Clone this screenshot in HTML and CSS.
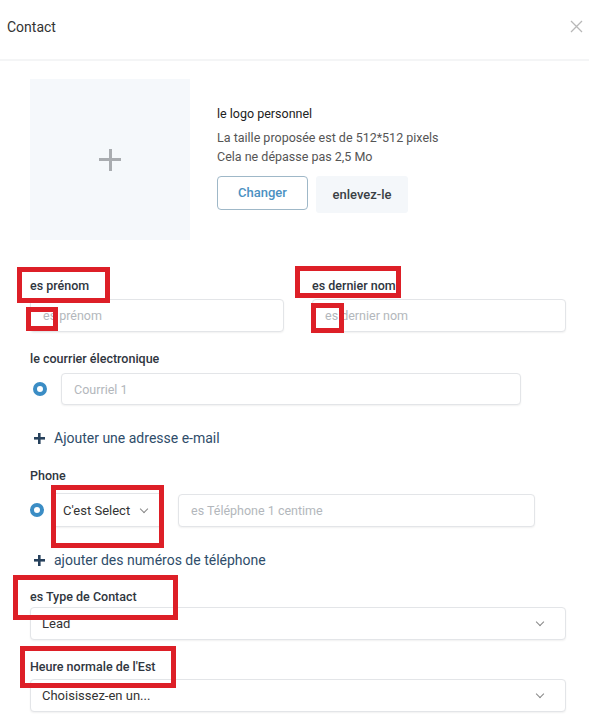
FILE: index.html
```html
<!DOCTYPE html>
<html>
<head lang="fr">
    <meta charset="UTF-8">
    <title>Contact</title>
    <link rel="stylesheet" href="styles.css">
</head>
<body>
<div id="modal">
    <div class="head">
        <span class="title">Contact</span>
        <a class="close" href="javascript:;">
            <svg width="13" height="13" viewBox="0 0 13 13"><path d="M1 1L12 12M12 1L1 12" stroke="#b8b8b8" stroke-width="1.3" fill="none"/></svg>
        </a>
    </div>

    <div class="logo">
        <div class="logoBox"><span class="plus"></span></div>
        <div class="logoInfo">
            <p class="logoTitle">le logo personnel</p>
            <p class="hint">La taille proposée est de 512*512 pixels</p>
            <p class="hint">Cela ne dépasse pas 2,5 Mo</p>
            <div class="btns">
                <a class="btnChange" href="javascript:;">Changer</a>
                <a class="btnRemove" href="javascript:;">enlevez-le</a>
            </div>
        </div>
    </div>

    <div class="names">
        <div class="col">
            <label>es prénom</label>
            <div class="input"><span class="ph">es prénom</span></div>
        </div>
        <div class="col">
            <label>es dernier nom</label>
            <div class="input"><span class="ph">es dernier nom</span></div>
        </div>
    </div>

    <div class="group email">
        <label>le courrier électronique</label>
        <div class="row">
            <span class="radio"></span>
            <div class="input wEmail"><span class="ph">Courriel 1</span></div>
        </div>
    </div>
    <a class="add addMail" href="javascript:;"><span class="addPlus"></span>Ajouter une adresse e-mail</a>

    <div class="group phone">
        <label>Phone</label>
        <div class="row">
            <span class="radio"></span>
            <div class="select small">C'est Select<span class="chev"></span></div>
            <div class="input wPhone"><span class="ph">es Téléphone 1 centime</span></div>
        </div>
    </div>
    <a class="add addPhone" href="javascript:;"><span class="addPlus"></span>ajouter des numéros de téléphone</a>

    <div class="group type">
        <label>es Type de Contact</label>
        <div class="select wide">Lead<span class="chev"></span></div>
    </div>

    <div class="group zone">
        <label>Heure normale de l'Est</label>
        <div class="select wide">Choisissez-en un...<span class="chev"></span></div>
    </div>

    <!-- annotations -->
    <div class="mark" style="left:17px;top:267px;width:93px;height:36px"></div>
    <div class="mark" style="left:26px;top:307px;width:32px;height:24px"></div>
    <div class="mark" style="left:295px;top:266px;width:106px;height:32px"></div>
    <div class="mark" style="left:311px;top:303px;width:33px;height:30px"></div>
    <div class="mark" style="left:51px;top:485px;width:113px;height:63px"></div>
    <div class="mark" style="left:13px;top:575px;width:165px;height:45px"></div>
    <div class="mark" style="left:20px;top:646px;width:156px;height:42px"></div>
</div>
</body>
</html>
```

FILE: styles.css
```css
*{
    margin: 0;
    padding: 0;
    box-sizing: border-box;
}
a{
    text-decoration: none;
}
body{
    font-family: Roboto, "Liberation Sans", sans-serif;
    color: #333;
    background: #fff;
}
#modal{
    width: 589px;
    height: 718px;
    position: relative;
    overflow: hidden;
}
.head{
    height: 61px;
    display: flex;
    align-items: center;
    justify-content: space-between;
    padding: 0 6px 6px 7px;
    border-bottom: 2px solid #f4f5f6;
}
.title{
    font-size: 14px;
    color: #333;
}
.close{
    display: block;
    width: 13px;
    height: 13px;
}
.close svg{
    display: block;
}
.logo{
    display: flex;
    padding: 18px 0 0 30px;
}
.logoBox{
    width: 160px;
    height: 161px;
    background: #f5f8fb;
    display: flex;
    align-items: center;
    justify-content: center;
}
.plus{
    display: block;
    width: 22px;
    height: 22px;
    background:
        linear-gradient(#a9acb0, #a9acb0) center / 22px 3px no-repeat,
        linear-gradient(#a9acb0, #a9acb0) center / 3px 22px no-repeat;
}
.logoInfo{
    margin-left: 27px;
    padding-top: 25px;
}
.logoTitle{
    font-size: 12.5px;
    line-height: 19px;
    color: #222;
    margin-bottom: 5px;
}
.hint{
    font-size: 12.5px;
    line-height: 19px;
    color: #555;
}
.btns{
    display: flex;
    align-items: flex-start;
    gap: 8px;
    margin-top: 10px;
}
.btnChange{
    display: flex;
    align-items: center;
    justify-content: center;
    width: 91px;
    height: 34px;
    border: 1px solid #9fb8c8;
    border-radius: 4px;
    color: #4b91c2;
    font-size: 13px;
    font-weight: 500;
    padding-bottom: 2px;
}
.btnRemove{
    display: flex;
    align-items: center;
    justify-content: center;
    width: 92px;
    height: 37px;
    background: #f4f7fa;
    border-radius: 3px;
    color: #3a3f45;
    font-size: 13px;
    font-weight: 500;
}
label{
    display: block;
    font-size: 12.5px;
    font-weight: 500;
    line-height: 18px;
    color: #2f3640;
}
.input,.select{
    display: flex;
    align-items: center;
    border: 1px solid #e3e5e8;
    border-radius: 4px;
    box-shadow: 0 1px 2px rgba(0,0,0,0.06);
    background: #fff;
    padding: 0 12px;
    font-size: 12.5px;
}
.ph{
    color: #b3b7bc;
}
.names{
    display: flex;
    gap: 28px;
    padding: 37px 0 0 30px;
}
.names .col{
    width: 254px;
}
.names .input{
    height: 33px;
    margin-top: 4px;
}
.group{
    padding-left: 30px;
}
.row{
    display: flex;
    align-items: center;
}
.radio{
    display: block;
    width: 14px;
    height: 14px;
    border-radius: 50%;
    border: 4.5px solid #3b8dc5;
    background: #fff;
}
.email{
    margin-top: 18px;
}
.email .row{
    margin-top: 5px;
}
.email .radio{
    margin-left: 3px;
}
.wEmail{
    width: 460px;
    height: 32px;
    margin-left: 14px;
}
.add{
    display: flex;
    align-items: center;
    padding-left: 34px;
    font-size: 14px;
    line-height: 20px;
    color: #2f4d6a;
}
.addPlus{
    display: block;
    width: 11px;
    height: 11px;
    margin-right: 9px;
    background:
        linear-gradient(#27415c, #27415c) center / 11px 2.6px no-repeat,
        linear-gradient(#27415c, #27415c) center / 2.6px 11px no-repeat;
}
.addMail{
    margin-top: 23px;
}
.phone{
    margin-top: 19px;
}
.phone .row{
    margin-top: 8px;
}
.select{
    justify-content: space-between;
    color: #333;
    font-size: 13px;
}
.select.small{
    width: 111px;
    height: 34px;
    margin-left: 8px;
    padding: 0 10px;
}
.wPhone{
    width: 357px;
    height: 33px;
    margin-left: 15px;
}
.chev{
    display: block;
    width: 6px;
    height: 6px;
    border-right: 1.2px solid #888;
    border-bottom: 1.2px solid #888;
    transform: rotate(45deg);
    margin: -3px 5px 0 0;
}
.addPhone{
    margin-top: 23px;
}
.type{
    margin-top: 18px;
}
.select.wide{
    width: 536px;
    height: 33px;
    padding: 0 17px 0 11px;
}
.type .select{
    margin-top: 1px;
}
.zone{
    margin-top: 18px;
}
.zone .select{
    margin-top: 3px;
}
.mark{
    position: absolute;
    border: 5px solid #dd1f27;
}
```
